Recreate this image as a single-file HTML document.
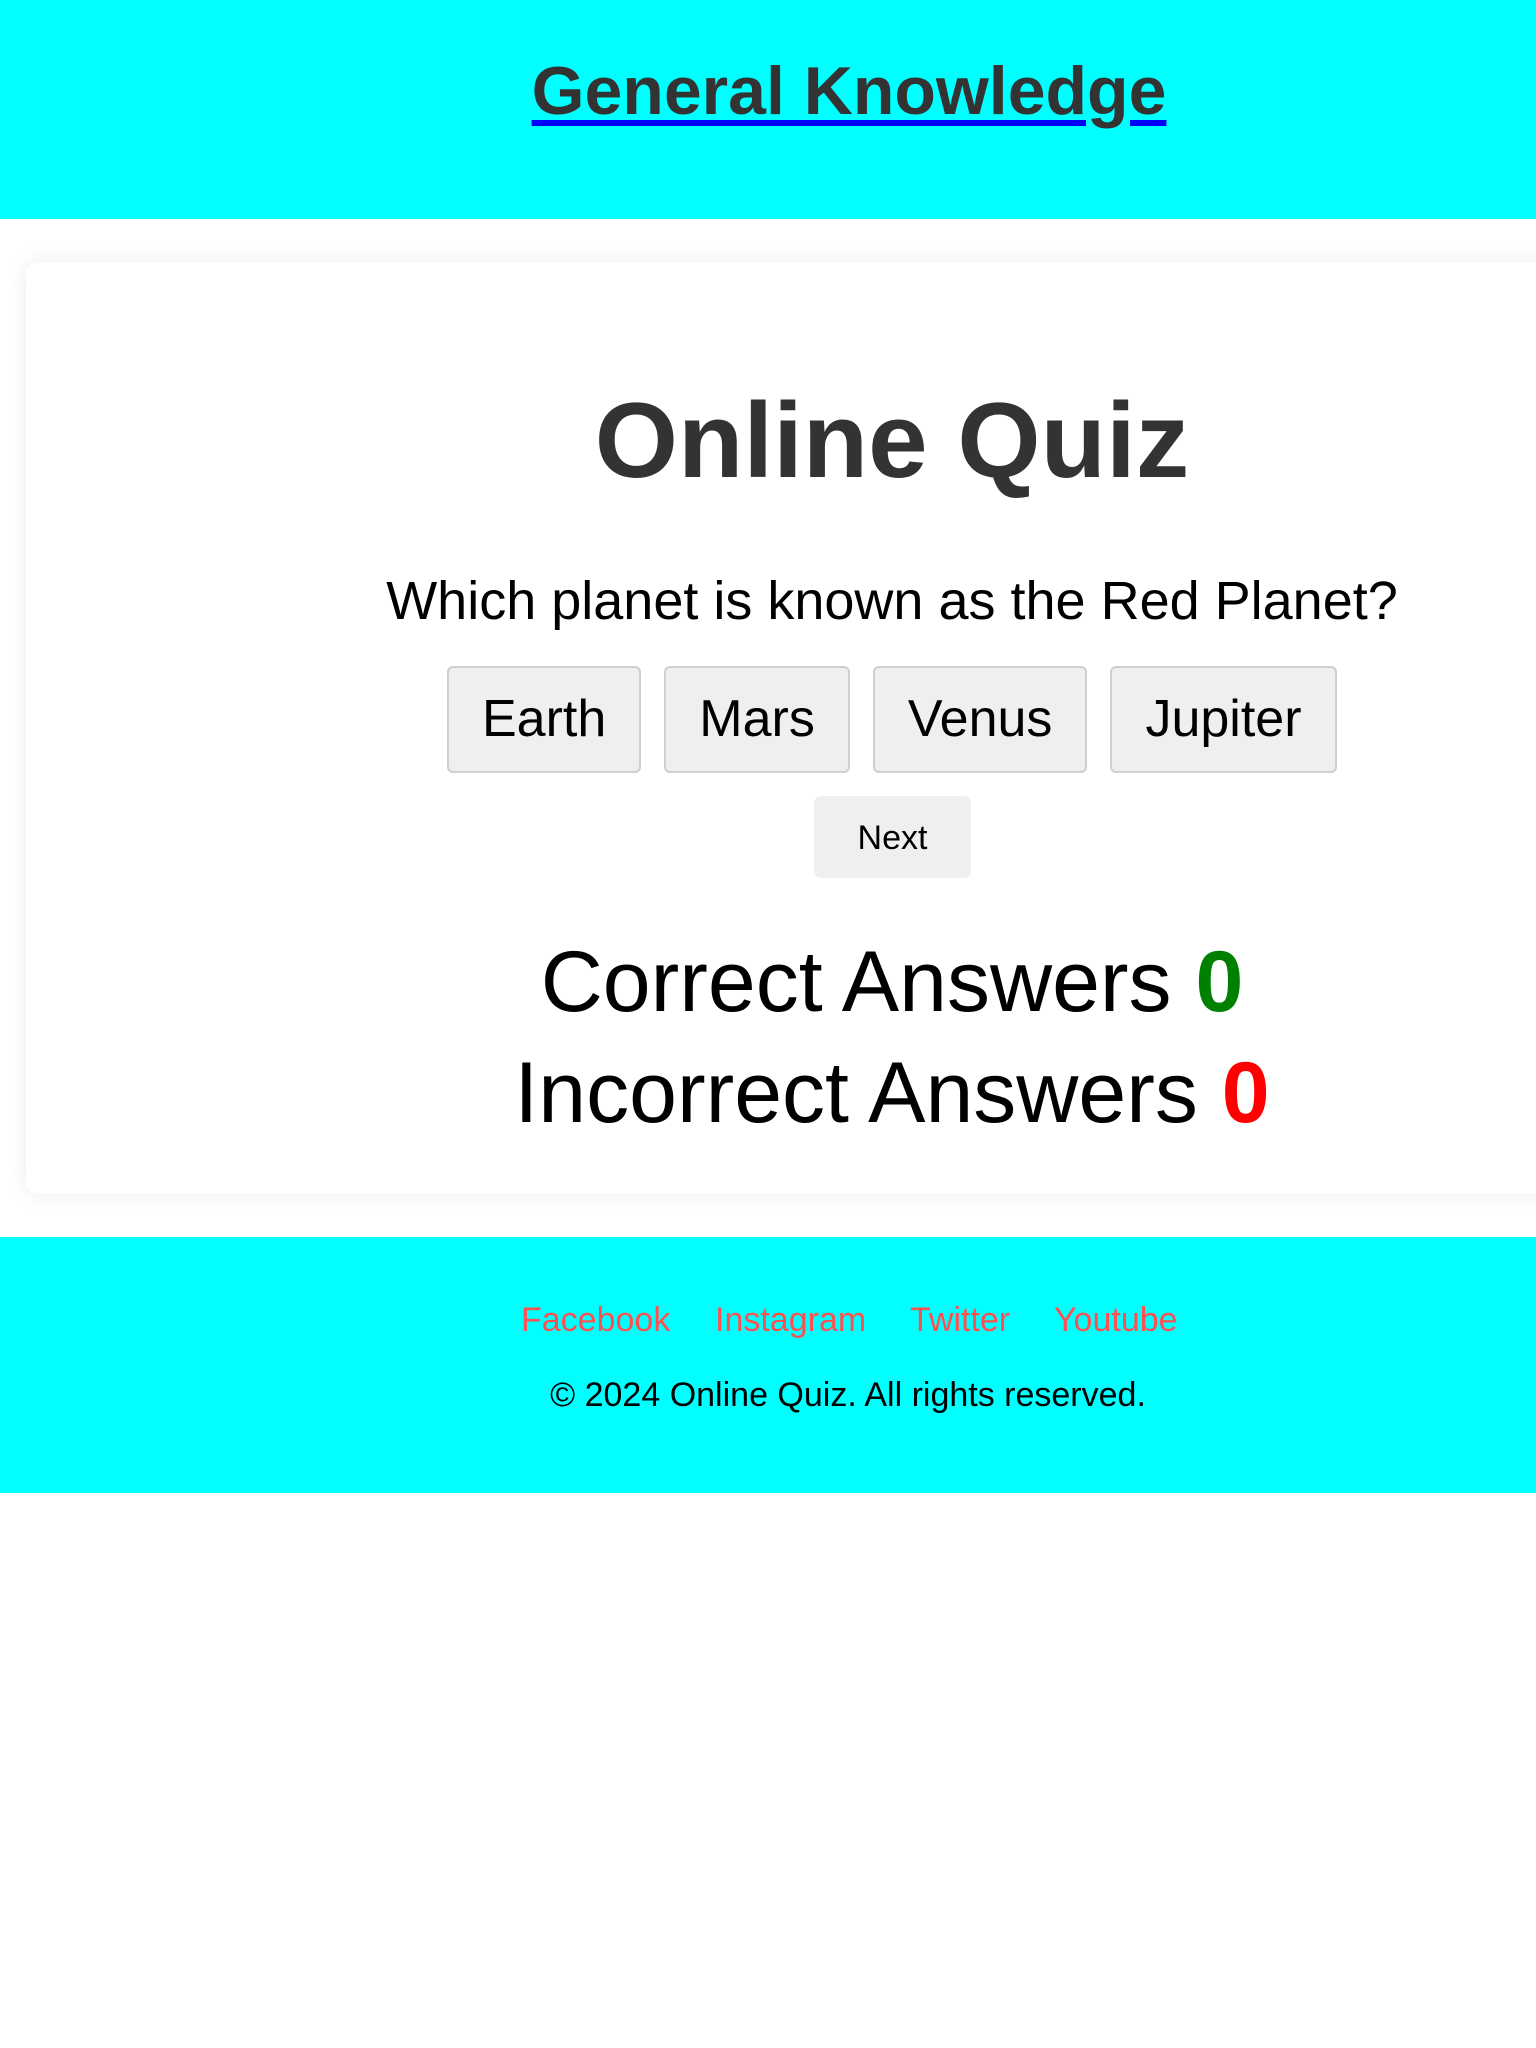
<!DOCTYPE html>
<html><head><meta charset="utf-8">
<style>
html,body{margin:0;padding:0;width:1536px;height:2048px;overflow:hidden;background:#fff;font-family:"Liberation Sans",Arial,sans-serif;position:relative}
.hdr{position:absolute;left:0;top:0;width:1536px;height:219px;background:#00ffff}
.c{position:absolute;text-align:center;white-space:nowrap}
.card{position:absolute;left:26px;top:262px;width:1700px;height:932px;background:#fff;border-radius:13px;box-shadow:0 0 22px rgba(0,0,0,0.08)}
.btns{position:absolute;top:666px;left:447px;display:flex;gap:23px}
.btn{box-sizing:border-box;height:107px;padding:0 33px;background:#efefef;border:2px solid #cfcfcf;border-radius:6px;font-size:52px;line-height:103px;color:#000}
.next{position:absolute;left:814px;top:796px;width:157px;height:82px;background:#efefef;border-radius:7px;font-size:34px;line-height:84px;text-align:center;color:#000}
.ftr{position:absolute;left:0;top:1237px;width:1536px;height:256px;background:#00ffff}
.lk{position:absolute;top:1303px;font-size:34px;line-height:34px;color:#ff5050}
</style></head><body>
<div class="hdr"></div>
<div class="c" style="left:0;width:1698px;top:57px;font-size:68px;line-height:68px;font-weight:bold;color:#333"><span style="text-decoration:underline;text-decoration-color:#0000ff;text-decoration-thickness:6px;text-underline-offset:6px">General Knowledge</span></div>
<div class="card"></div>
<div class="c" style="left:0;width:1784px;top:387px;font-size:107px;line-height:107px;font-weight:bold;color:#333">Online Quiz</div>
<div class="c" style="left:0;width:1784px;top:574px;font-size:54px;line-height:54px;color:#000">Which planet is known as the Red Planet?</div>
<div class="btns"><div class="btn">Earth</div><div class="btn">Mars</div><div class="btn">Venus</div><div class="btn">Jupiter</div></div>
<div class="next">Next</div>
<div class="c" style="left:0;width:1784px;top:939px;font-size:86px;line-height:86px;color:#000">Correct Answers <b style="color:#008000">0</b></div>
<div class="c" style="left:0;width:1784px;top:1050px;font-size:86px;line-height:86px;color:#000">Incorrect Answers <b style="color:#ff0000">0</b></div>
<div class="ftr"></div>
<div class="lk" style="left:521px">Facebook</div>
<div class="lk" style="left:715px">Instagram</div>
<div class="lk" style="left:910px">Twitter</div>
<div class="lk" style="left:1054px">Youtube</div>
<div class="c" style="left:0;width:1696px;top:1378px;font-size:34px;line-height:34px;color:#000">© 2024 Online Quiz. All rights reserved.</div>
</body></html>
